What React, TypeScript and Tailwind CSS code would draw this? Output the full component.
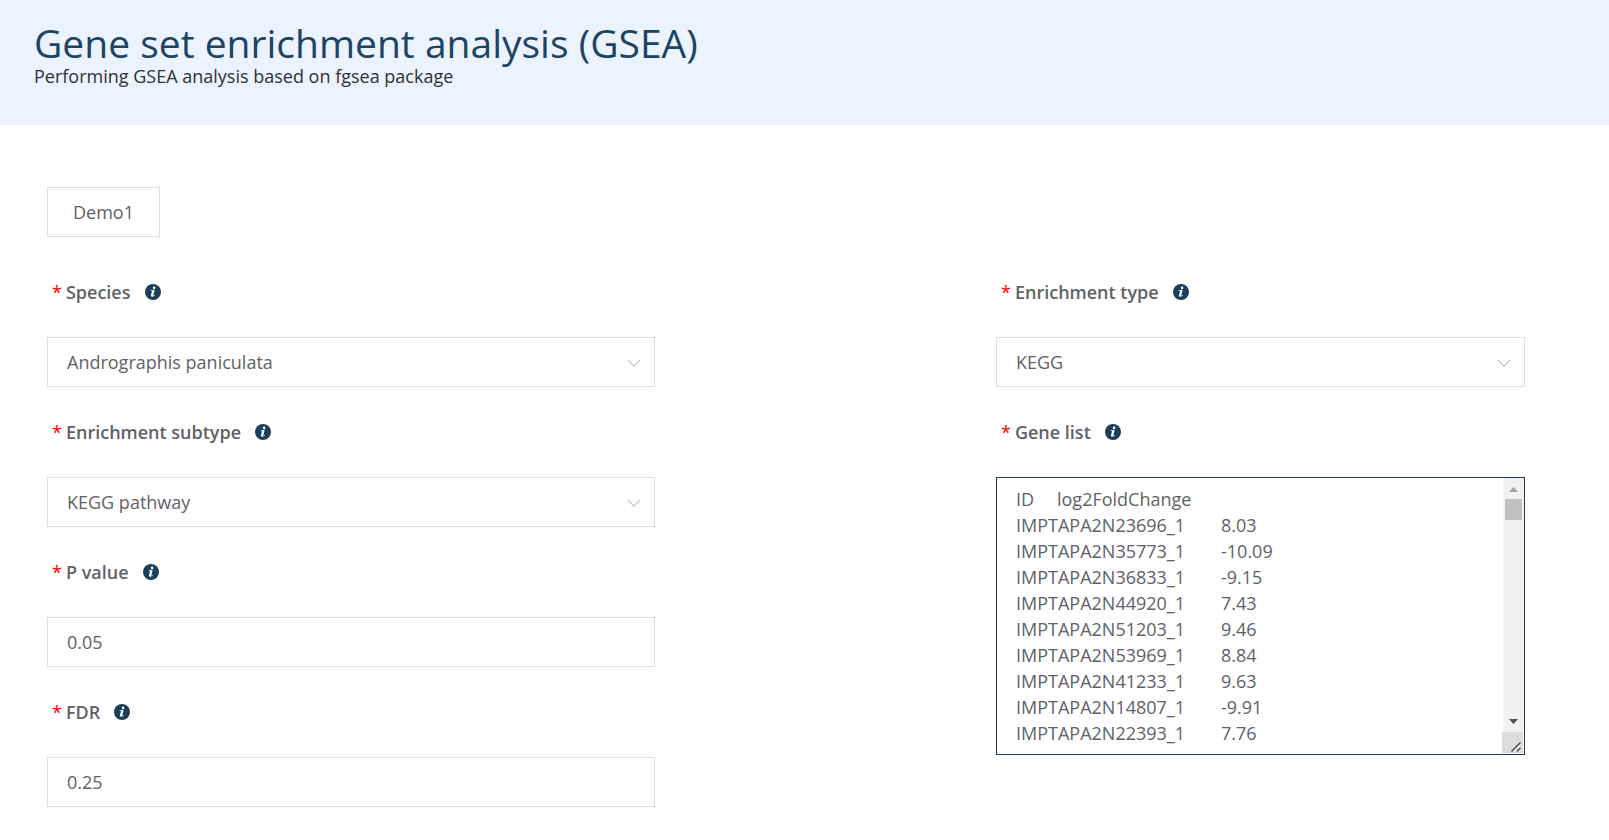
import { useState } from "react";

const GENE_LIST = [
  "ID\tlog2FoldChange",
  "IMPTAPA2N23696_1\t8.03",
  "IMPTAPA2N35773_1\t-10.09",
  "IMPTAPA2N36833_1\t-9.15",
  "IMPTAPA2N44920_1\t7.43",
  "IMPTAPA2N51203_1\t9.46",
  "IMPTAPA2N53969_1\t8.84",
  "IMPTAPA2N41233_1\t9.63",
  "IMPTAPA2N14807_1\t-9.91",
  "IMPTAPA2N22393_1\t7.76",
].join("\n");

const CONTROL =
  "h-[50px] w-full appearance-none border border-[#dcdfe6] bg-white px-[19px] text-lg text-[#606266] outline-none focus:border-[#1b3e5d]";

interface FieldProps {
  id: string;
  label: string;
  children: React.ReactNode;
}

function InfoIcon(): React.ReactElement {
  return (
    <svg viewBox="0 0 16 16" className="h-4 w-4 shrink-0" aria-hidden>
      <circle cx="8" cy="8" r="8" fill="#1b3e5d" />
      <circle cx="9.1" cy="3.9" r="1.3" fill="#fff" />
      <path
        d="M5.8 6.3 9.7 5.9 8.3 11.2c-.1.5.2.6.6.3l.8-.8.4.4c-.8 1-1.7 1.7-2.9 1.700-1.200 0-1.500-.7-1.200-1.700l1-3.600c.1-.4 0-.6-.4-.6H5.700z"
        fill="#fff"
      />
    </svg>
  );
}

function Field({ id, label, children }: FieldProps): React.ReactElement {
  return (
    <div>
      <div className="flex h-[50px] items-center gap-3.5 pl-[5px]">
        <label
          htmlFor={id}
          className="flex gap-1 text-lg font-semibold text-[#606266]"
        >
          <span className="font-normal text-[#ff0000]">*</span>
          {label}
        </label>
        <InfoIcon />
      </div>
      <div className="mt-5">{children}</div>
    </div>
  );
}

interface SelectBoxProps {
  id: string;
  options: string[];
}

function SelectBox({ id, options }: SelectBoxProps): React.ReactElement {
  return (
    <div className="relative">
      <select id={id} className={CONTROL}>
        {options.map((option) => (
          <option key={option}>{option}</option>
        ))}
      </select>
      <svg
        viewBox="0 0 14 8"
        className="pointer-events-none absolute top-[22px] right-3.5 h-2 w-3.5"
        fill="none"
        stroke="#c0c4cc"
        strokeWidth="1.3"
        aria-hidden
      >
        <path d="M.7.9 7 7.1 13.3.9" />
      </svg>
    </div>
  );
}

function ScrollTrack(): React.ReactElement {
  return (
    <div
      className="pointer-events-none absolute inset-y-px right-px flex w-[21px] flex-col items-center bg-[#f1f1f1]"
      aria-hidden
    >
      <svg viewBox="0 0 21 21" className="h-[21px] w-[21px]">
        <path d="M6 14 10.5 9 15 14z" fill="#a3a3a3" />
      </svg>
      <div className="h-[21px] w-[17px] bg-[#c1c1c1]" />
      <svg viewBox="0 0 21 21" className="mt-auto h-[21px] w-[21px]">
        <path d="M6 8 10.5 13 15 8z" fill="#505050" />
      </svg>
      <div className="flex w-full bg-white pb-px">
        <svg viewBox="0 0 21 21" className="-ml-px h-[21px] w-[21px] bg-[#dcdcdc]">
          <path
            d="M9.5 19.5 18.5 10.5M15 19.5 18.5 16"
            stroke="#505050"
            strokeWidth="1.5"
          />
          <path
            d="M11.5 19.5 18.5 12.5M17 19.5 18.5 18"
            stroke="#fff"
            strokeWidth="1"
          />
        </svg>
      </div>
    </div>
  );
}

export default function App(): React.ReactElement {
  const [pValue, setPValue] = useState("0.05");
  const [fdr, setFdr] = useState("0.25");
  const [geneList, setGeneList] = useState(GENE_LIST);

  return (
    <div className="min-h-screen bg-white font-['Open_Sans',sans-serif]">
      <header className="h-[125px] bg-[#ebf3ff] px-[34px] pt-[19px]">
        <h1 className="text-[39px] leading-[48px] text-[#1f4463]">
          Gene set enrichment analysis (GSEA)
        </h1>
        <p className="text-lg leading-[18px] text-[#303133]">
          Performing GSEA analysis based on fgsea package
        </p>
      </header>

      <main className="pt-[62px] pr-[84px] pb-8 pl-[47px]">
        <button
          type="button"
          className="h-[50px] border border-[#dcdfe6] bg-white px-[25px] text-lg text-[#606266]"
        >
          Demo1
        </button>

        <form className="mt-[30px] grid grid-cols-[608fr_341fr_529fr] items-start">
          <div className="flex flex-col gap-5">
            <Field id="species" label="Species">
              <SelectBox id="species" options={["Andrographis paniculata"]} />
            </Field>
            <Field id="subtype" label="Enrichment subtype">
              <SelectBox id="subtype" options={["KEGG pathway"]} />
            </Field>
            <Field id="pvalue" label="P value">
              <input
                id="pvalue"
                className={CONTROL}
                value={pValue}
                onChange={(e) => setPValue(e.target.value)}
              />
            </Field>
            <Field id="fdr" label="FDR">
              <input
                id="fdr"
                className={CONTROL}
                value={fdr}
                onChange={(e) => setFdr(e.target.value)}
              />
            </Field>
          </div>

          <div className="col-start-3 flex flex-col gap-5">
            <Field id="type" label="Enrichment type">
              <SelectBox id="type" options={["KEGG"]} />
            </Field>
            <Field id="genes" label="Gene list">
              <div className="relative">
                <textarea
                  id="genes"
                  rows={10}
                  className="block h-[278px] w-full resize-none border border-[#1b3e5d] bg-white px-[19px] py-2 text-lg leading-[26px] text-[#606266] outline-none [scrollbar-width:none] [tab-size:41px]"
                  value={geneList}
                  onChange={(e) => setGeneList(e.target.value)}
                />
                <ScrollTrack />
              </div>
            </Field>
          </div>
        </form>
      </main>
    </div>
  );
}
